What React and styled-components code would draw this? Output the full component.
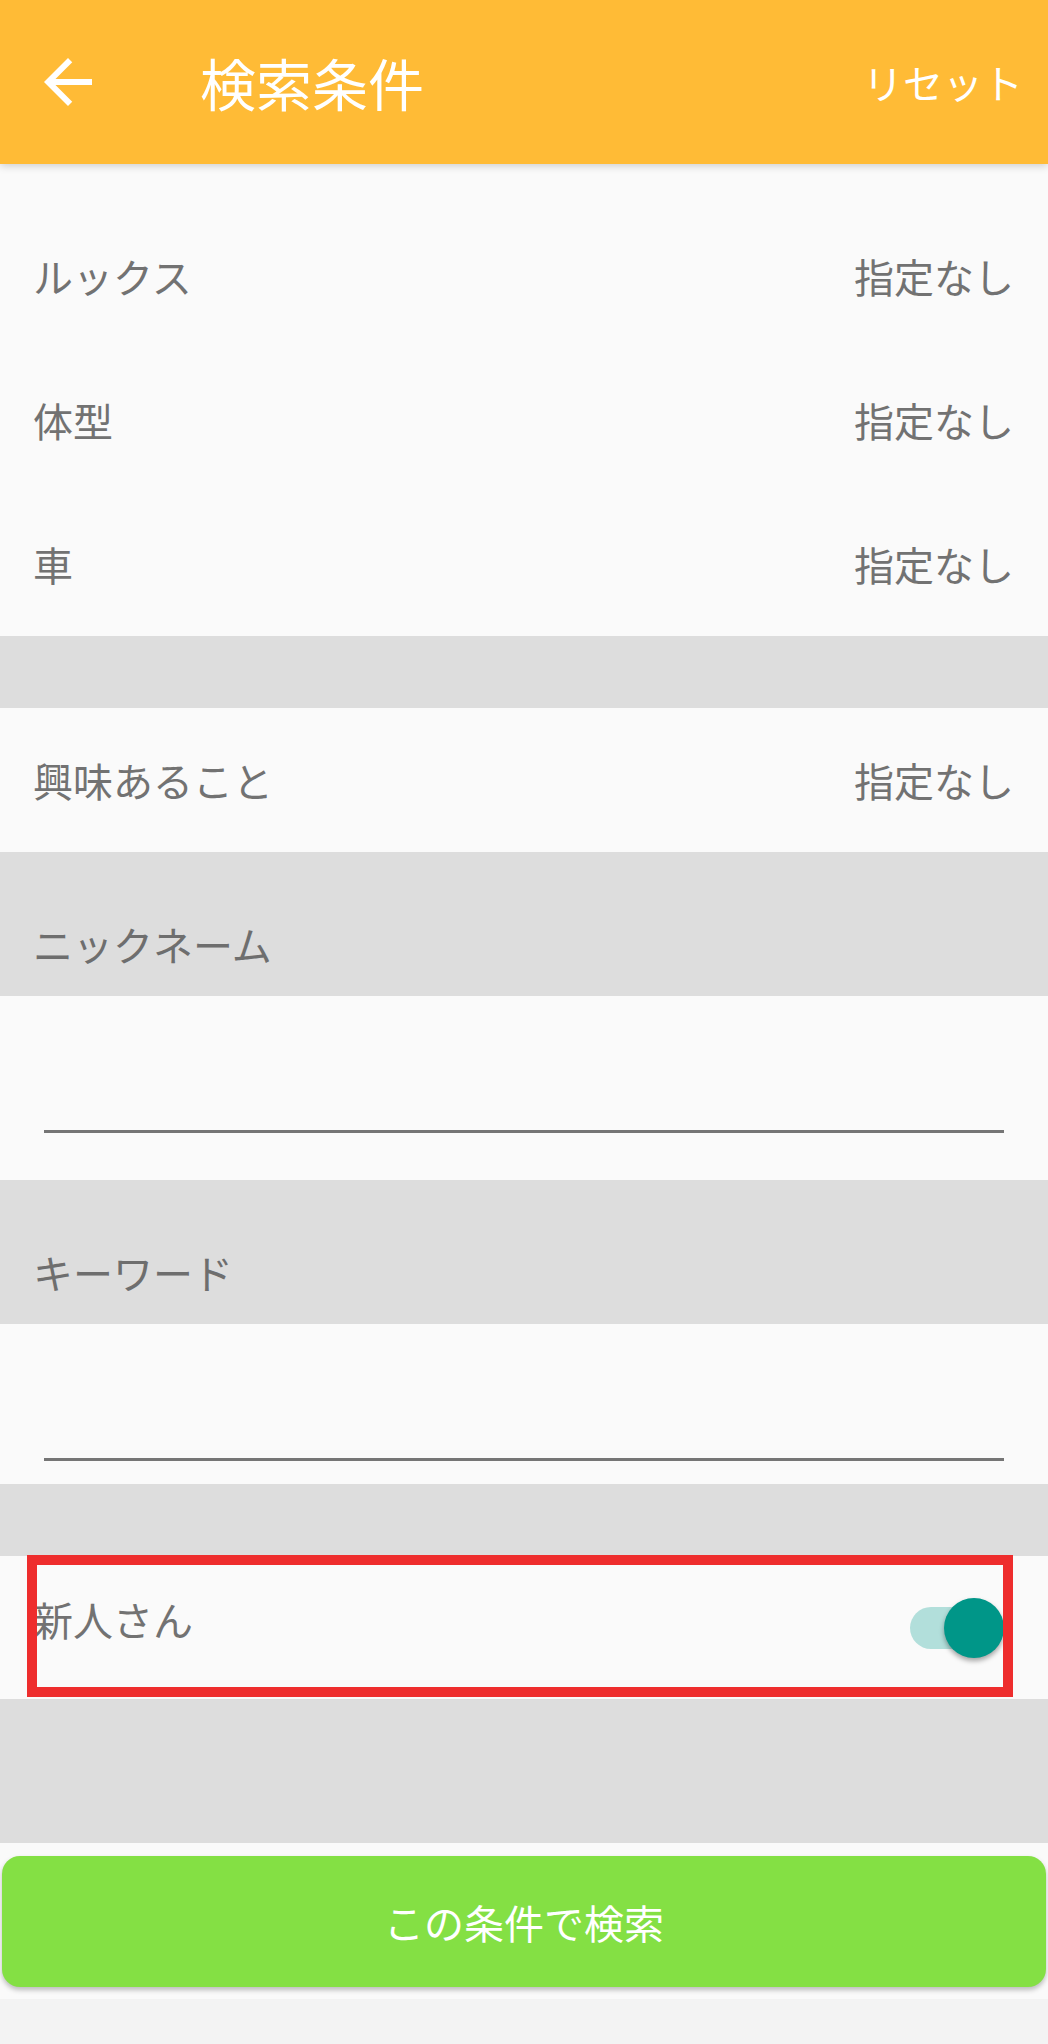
import React from "react";
import styled, { createGlobalStyle } from "styled-components";

const GlobalStyle = createGlobalStyle`
  * {
    box-sizing: border-box;
  }
  body {
    margin: 0;
    background-color: #f3f3f3;
    font-family: "Noto Sans CJK JP", "Noto Sans", sans-serif;
  }
`;

const Page = styled.div`
  width: 1048px;
  display: flex;
  flex-direction: column;
`;

const Header = styled.header`
  position: relative;
  z-index: 2;
  height: 164px;
  display: flex;
  align-items: center;
  background-color: #ffbb36;
  box-shadow: 0 2px 8px rgba(0, 0, 0, 0.18);
  color: #ffffff;
`;

const BackButton = styled.div`
  width: 72px;
  height: 72px;
  margin-left: 32px;
  display: flex;
`;

const Title = styled.h1`
  margin: 0 0 0 96px;
  font-size: 56px;
  font-weight: 400;
  line-height: 1;
  flex: 1;
`;

const Reset = styled.div`
  font-size: 40px;
  line-height: 1;
  padding-right: 25px;
`;

const Section = styled.section`
  background-color: #fafafa;
  padding-top: ${(p) => p.top || 0}px;
`;

const Row = styled.div`
  height: ${(p) => p.h || 144}px;
  display: flex;
  align-items: center;
  justify-content: space-between;
  padding: 0 34px 0 33px;
  background-color: #fafafa;
  color: #727272;
  font-size: 40px;
  line-height: 1;
`;

const Value = styled.span``;

const Gap = styled.div`
  height: ${(p) => p.h}px;
  background-color: #dddddd;
`;

const Label = styled.div`
  height: 144px;
  padding: 72px 0 0 33px;
  background-color: #dddddd;
  color: #6e6e6e;
  font-size: 40px;
  line-height: 40px;
`;

const Field = styled.div`
  background-color: #fafafa;
  padding: 80px 44px ${(p) => p.tail}px;
`;

const TextInput = styled.input`
  display: block;
  width: 100%;
  height: 57px;
  border: 0;
  border-bottom: 3px solid #757575;
  background: transparent;
  outline: none;
  font-family: inherit;
  font-size: 40px;
  color: #333333;
`;

const ToggleRow = styled(Row)`
  position: relative;
  padding-right: 44px;
`;

const ToggleLabel = styled.span`
  margin-bottom: 18px;
`;

const Highlight = styled.div`
  position: absolute;
  left: 27px;
  right: 35px;
  top: -1px;
  bottom: 2px;
  border: 10px solid #ee2d2d;
  pointer-events: none;
`;

const Track = styled.div`
  position: relative;
  width: 94px;
  height: 42px;
  border-radius: 21px;
  background-color: #b2dfdb;
`;

const Thumb = styled.div`
  position: absolute;
  top: -9px;
  right: 0;
  width: 60px;
  height: 60px;
  border-radius: 50%;
  background-color: #009688;
  box-shadow: 0 3px 5px rgba(0, 0, 0, 0.35);
`;

const Footer = styled.div`
  background-color: #fafafa;
  padding: 13px 2px 12px;
`;

const SearchButton = styled.button`
  width: 100%;
  height: 131px;
  border: 0;
  border-radius: 18px;
  background-color: #84e044;
  box-shadow: 0 3px 5px rgba(0, 0, 0, 0.25);
  color: #ffffff;
  font-family: inherit;
  font-size: 40px;
  line-height: 1;
`;

const ArrowBack = () => (
  <svg width="72" height="72" viewBox="0 0 24 24" fill="#ffffff">
    <path d="M20 11H7.83l5.59-5.59L12 4l-8 8 8 8 1.41-1.41L7.83 13H20v-2z" />
  </svg>
);

const conditions = ["ルックス", "体型", "車"];

const App = () => {
  return (
    <Page>
      <GlobalStyle />
      <Header>
        <BackButton>
          <ArrowBack />
        </BackButton>
        <Title>検索条件</Title>
        <Reset>リセット</Reset>
      </Header>

      <Section top={40}>
        {conditions.map((c) => (
          <Row key={c}>
            <span>{c}</span>
            <Value>指定なし</Value>
          </Row>
        ))}
      </Section>
      <Gap h={72} />
      <Row>
        <span>興味あること</span>
        <Value>指定なし</Value>
      </Row>

      <Label>ニックネーム</Label>
      <Field tail={47}>
        <TextInput />
      </Field>
      <Label>キーワード</Label>
      <Field tail={23}>
        <TextInput />
      </Field>

      <Gap h={72} />
      <ToggleRow h={143}>
        <ToggleLabel>新人さん</ToggleLabel>
        <Track>
          <Thumb />
        </Track>
        <Highlight />
      </ToggleRow>
      <Gap h={144} />

      <Footer>
        <SearchButton>この条件で検索</SearchButton>
      </Footer>
    </Page>
  );
};

export default App;
